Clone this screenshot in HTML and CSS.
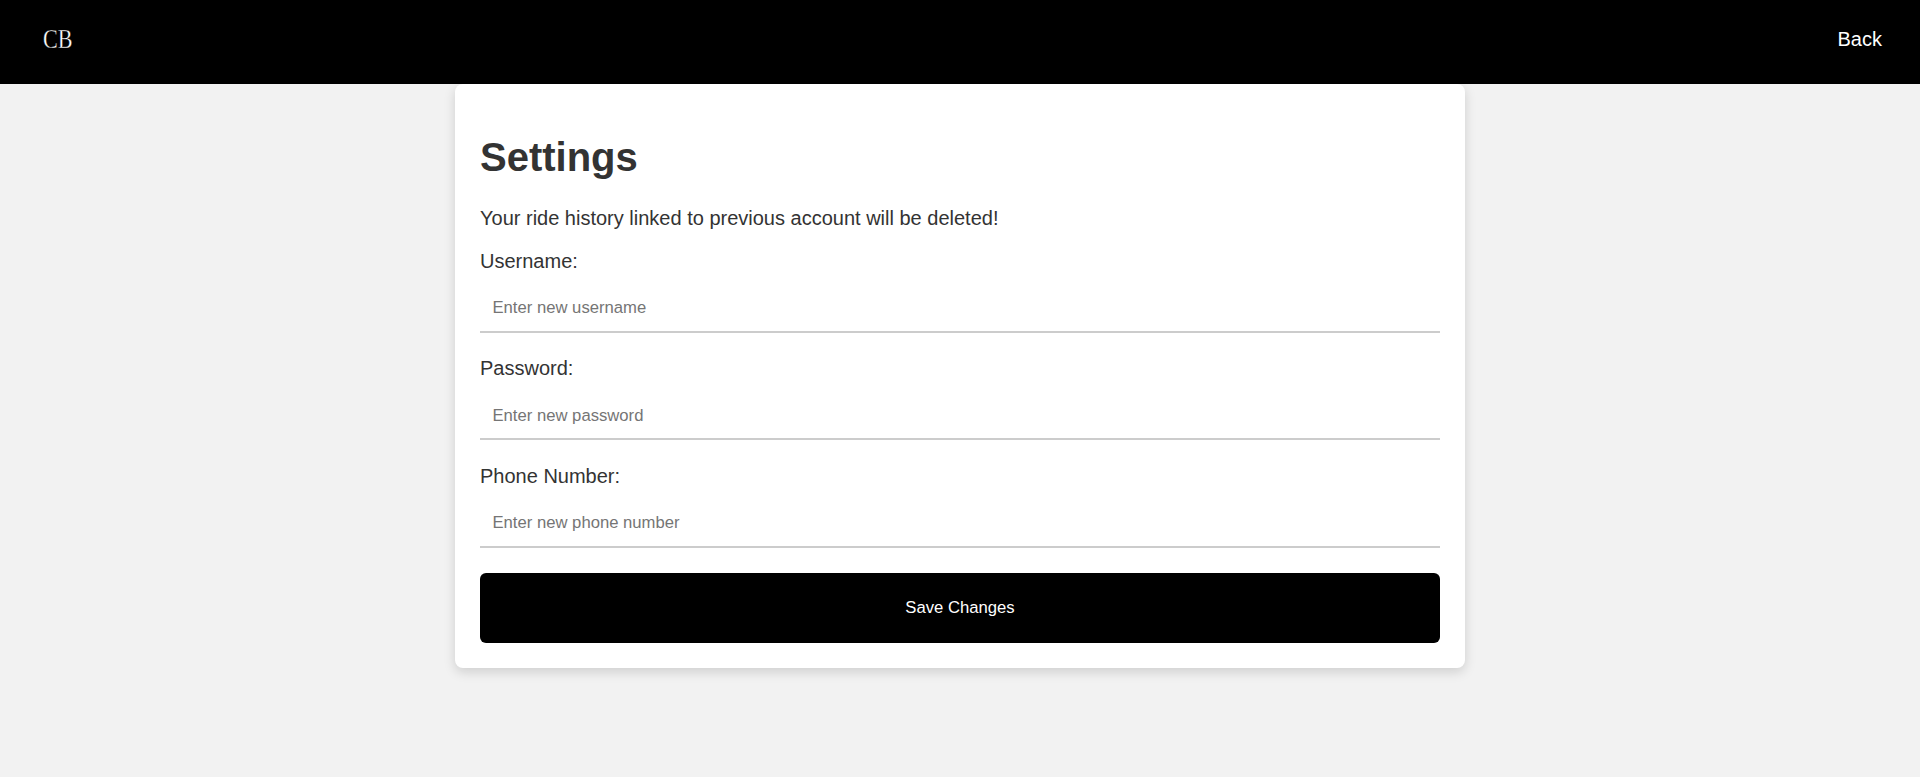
FILE: index.html
```html
<!DOCTYPE html>
<html lang="en">
<head>
<meta charset="utf-8">
<title>Settings</title>
<link rel="stylesheet" href="styles.css">
</head>
<body>
<header class="topbar">
  <span class="logo">CB</span>
  <a class="back" href="#">Back</a>
</header>
<main class="card">
  <h1 class="title">Settings</h1>
  <p class="warning">Your ride history linked to previous account will be deleted!</p>
  <form class="form">
    <label class="label" for="u">Username:</label>
    <input class="field" id="u" type="text" placeholder="Enter new username">
    <label class="label" for="p">Password:</label>
    <input class="field" id="p" type="password" placeholder="Enter new password">
    <label class="label" for="n">Phone Number:</label>
    <input class="field" id="n" type="text" placeholder="Enter new phone number">
    <button class="save" type="button">Save Changes</button>
  </form>
</main>
</body>
</html>
```
FILE: styles.css
```css
* { box-sizing: border-box; }
html, body { margin: 0; height: 100%; }
body {
  background: #f2f2f2;
  font-family: "Liberation Sans", Arial, sans-serif;
  color: #333;
  overflow: hidden;
}
.topbar {
  height: 84px;
  background: #000;
  display: flex;
  align-items: center;
  justify-content: space-between;
  padding: 0 38px 0 43px;
}
.logo {
  display: inline-block;
  font-family: "Liberation Serif", serif;
  font-size: 27px;
  line-height: 1;
  color: #fff;
  margin-top: -5px;
  transform: scaleX(0.82);
  transform-origin: left center;
  -webkit-text-stroke: 0.35px #000;
}
.back {
  color: #fff;
  font-size: 20px;
  text-decoration: none;
  margin-top: -6px;
}
.card {
  width: 1010px;
  height: 584px;
  margin: 0 auto;
  background: #fff;
  border-radius: 8px;
  padding: 25px;
  box-shadow: 0 4px 12px rgba(0, 0, 0, 0.15);
}
.title {
  margin: 25px 0 0;
  font-size: 40px;
  line-height: 46px;
  font-weight: 700;
}
.warning {
  margin: 27px 0 0;
  font-size: 20px;
  line-height: 23px;
}
.form {
  display: flex;
  flex-direction: column;
  padding-top: 19.9px;
}
.label {
  display: block;
  font-size: 20px;
  line-height: 23px;
}
.field {
  display: block;
  width: 100%;
  height: 47.5px;
  margin: 12.4px 0 24.7px;
  padding: 0 12.5px;
  border: 0;
  border-bottom: 2px solid #ccc;
  outline: none;
  background: #fff;
  font: 16.67px "Liberation Sans", Arial, sans-serif;
}
.field::placeholder { color: #757575; }
.save {
  height: 70px;
  margin-top: 0.3px;
  border: 0;
  border-radius: 6px;
  background: #000;
  color: #fff;
  font: 16.67px "Liberation Sans", Arial, sans-serif;
}
```
